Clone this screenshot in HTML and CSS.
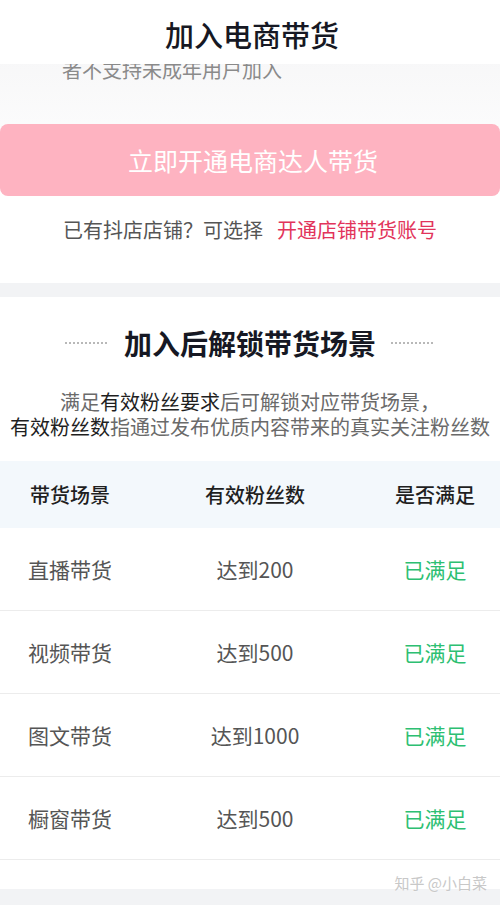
FILE: index.html
```html
<!DOCTYPE html>
<html lang="zh-CN">
<head>
    <meta charset="UTF-8">
    <meta name="viewport" content="width=device-width, initial-scale=1.0">
    <title>加入电商带货</title>
    <link rel="stylesheet" href="styles.css">
</head>
<body>

    <div class="page">
        <div class="header">
            <svg class="back" width="20" height="40" viewBox="0 0 20 40">
                <polyline points="16,3 2,19 16,35" fill="none" stroke="#222" stroke-width="2.6"/>
            </svg>
            <h1 class="title">加入电商带货</h1>
        </div>

        <div class="intro">
            <div class="note"><span>者不支持未成年用户加入</span></div>
            <button class="open-btn">立即开通电商达人带货</button>
            <p class="shop-line">已有抖店店铺？可选择<a class="shop-link">开通店铺带货账号</a></p>
        </div>

        <div class="unlock">
            <h2 class="unlock-title">加入后解锁带货场景</h2>
            <p class="desc">满足<b>有效粉丝要求</b>后可解锁对应带货场景，<br><b>有效粉丝数</b>指通过发布优质内容带来的真实关注粉丝数</p>

            <div class="table">
                <div class="row head">
                    <span>带货场景</span>
                    <span>有效粉丝数</span>
                    <span>是否满足</span>
                </div>
                <div class="row">
                    <span>直播带货</span>
                    <span>达到200</span>
                    <span class="ok">已满足</span>
                </div>
                <div class="row">
                    <span>视频带货</span>
                    <span>达到500</span>
                    <span class="ok">已满足</span>
                </div>
                <div class="row">
                    <span>图文带货</span>
                    <span>达到1000</span>
                    <span class="ok">已满足</span>
                </div>
                <div class="row">
                    <span>橱窗带货</span>
                    <span>达到500</span>
                    <span class="ok">已满足</span>
                </div>
            </div>
            <div class="watermark">知乎 @小白菜</div>
        </div>
    </div>

</body>
</html>
```

FILE: styles.css
```css
body {
    margin: 0;
    font-family: "Noto Sans CJK SC", "Noto Sans", sans-serif;
    background: #f2f3f5;
}
.page {
    width: 500px;
    height: 905px;
    overflow: hidden;
    background: #f2f3f5;
}
.header {
    position: relative;
    z-index: 2;
    height: 64px;
    background: #fff;
    display: flex;
    align-items: center;
    justify-content: center;
}
.back {
    position: absolute;
    left: -17px;
    top: 12px;
}
.title {
    margin: 4px 0 0 4px;
    font-size: 29px;
    font-weight: 500;
    color: #161823;
}
.intro {
    background: linear-gradient(#f7f7f8, #fff 60%);
    padding-bottom: 39px;
}
.note {
    height: 28px;
    margin-top: -10px;
    overflow: hidden;
    display: flex;
    align-items: flex-end;
    padding-left: 62px;
}
.note span {
    font-size: 20px;
    line-height: 24px;
    color: #8a8a8a;
}
.open-btn {
    display: block;
    width: 100%;
    height: 72px;
    margin-top: 42px;
    border: none;
    border-radius: 8px;
    background: #feb3c1;
    color: #fff;
    font-family: inherit;
    font-size: 25px;
    padding: 0 0 0 6px;
}
.shop-line {
    margin: 20px 0 0;
    text-align: center;
    font-size: 20px;
    line-height: 28px;
    color: #555;
}
.shop-link {
    margin-left: 14px;
    color: #e2345b;
}
.unlock {
    position: relative;
    margin-top: 14px;
    background: #fff;
    padding-top: 26px;
    padding-bottom: 29px;
}
.unlock-title {
    margin: 0;
    display: flex;
    align-items: center;
    justify-content: center;
    gap: 15px;
    font-size: 28px;
    line-height: 40px;
    font-weight: 700;
    color: #161823;
}
.unlock-title::before,
.unlock-title::after {
    content: "";
    width: 44px;
    height: 2px;
    opacity: 0.7;
    background: repeating-linear-gradient(to right, #9a9a9a 0 2px, transparent 2px 4px);
}
.desc {
    margin: 26px 0 0;
    text-align: center;
    font-size: 20px;
    line-height: 25px;
    color: #6a6a6a;
}
.desc b {
    font-weight: 400;
    color: #1f1f1f;
}
.table {
    margin-top: 22px;
}
.row {
    display: grid;
    grid-template-columns: 140px 1fr 130px;
    align-items: center;
    height: 82px;
    border-bottom: 1px solid #ececec;
    text-align: center;
    font-size: 21px;
    color: #555;
}
.row.head {
    height: 67px;
    border-bottom: none;
    background: #f3f8fc;
    font-size: 20px;
    font-weight: 500;
    color: #1f1f1f;
}
.ok {
    color: #2dbf72;
}
.watermark {
    position: absolute;
    right: 13px;
    bottom: -4px;
    font-size: 15px;
    color: #c8c8c8;
    text-shadow: 0 0 2px #fff;
}
```
